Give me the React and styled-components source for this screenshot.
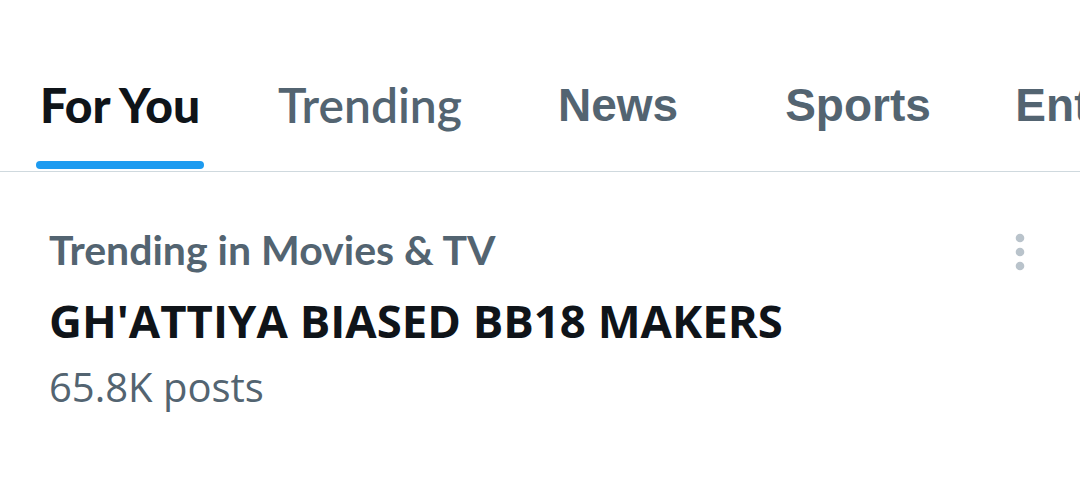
import React from "react";
import styled, { createGlobalStyle } from "styled-components";

const GlobalStyle = createGlobalStyle`
  html, body {
    margin: 0;
    padding: 0;
    background: #ffffff;
    overflow: hidden;
  }
`;

const tabs = [
  { label: "For You", width: 240, active: true, font: "Lato" },
  { label: "Trending", width: 260, font: "Lato" },
  { label: "News", width: 236, font: "Liberation Sans" },
  { label: "Sports", width: 244, font: "Liberation Sans" },
  { label: "Entertainment", width: 380, font: "Liberation Sans" },
];

export default function App() {
  return (
    <Page>
      <GlobalStyle />
      <TabBar>
        {tabs.map((t) => (
          <Tab key={t.label} $width={t.width}>
            <TabLabel $active={t.active} $font={t.font}>
              {t.label}
            </TabLabel>
            {t.active && <Underline />}
          </Tab>
        ))}
      </TabBar>
      <TrendRow>
        <TrendText>
          <Context>Trending in Movies &amp; TV</Context>
          <Title>GH'ATTIYA BIASED BB18 MAKERS</Title>
          <Posts>65.8K posts</Posts>
        </TrendText>
        <MoreButton aria-label="More">
          <svg width="12" height="40" viewBox="0 0 12 40">
            <circle cx="6" cy="6" r="4.3" fill="#b9c3cb" />
            <circle cx="6" cy="20" r="4.3" fill="#b9c3cb" />
            <circle cx="6" cy="34" r="4.3" fill="#b9c3cb" />
          </svg>
        </MoreButton>
      </TrendRow>
    </Page>
  );
}

const Page = styled.div`
  width: 1080px;
  height: 483px;
  background: #ffffff;
  overflow: hidden;
`;

const TabBar = styled.div`
  display: flex;
  flex-direction: row;
  height: 172px;
  padding-top: 73px;
  box-sizing: border-box;
  border-bottom: 1.5px solid #cfd9de;
  width: 1080px;
  overflow: hidden;
`;

const Tab = styled.div`
  flex: 0 0 ${(p) => p.$width}px;
  display: flex;
  flex-direction: column;
  align-items: center;
  justify-content: space-between;
`;

const TabLabel = styled.div`
  font-family: ${(p) => (p.$font === "Lato" ? '"Lato"' : '"Liberation Sans"')}, sans-serif;
  font-size: ${(p) => (p.$font === "Lato" ? "48px" : "46px")};
  font-weight: ${(p) => (p.$active ? 900 : p.$font === "Lato" ? 600 : 700)};
  color: ${(p) => (p.$active ? "#0f1419" : "#536471")};
  line-height: 64px;
  white-space: nowrap;
`;

const Underline = styled.div`
  width: 168px;
  height: 8px;
  border-radius: 4px;
  background: #1d9bf0;
  margin-bottom: 2px;
`;

const TrendRow = styled.div`
  display: flex;
  flex-direction: row;
  justify-content: space-between;
  align-items: flex-start;
  padding: 54px 54px 0 49px;
`;

const TrendText = styled.div`
  display: flex;
  flex-direction: column;
`;

const Context = styled.div`
  font-family: "Lato", sans-serif;
  font-weight: 700;
  font-size: 41px;
  color: #536471;
  line-height: 48px;
`;

const Title = styled.div`
  font-family: "Open Sans", sans-serif;
  font-weight: 700;
  font-size: 45.5px;
  color: #0f1419;
  line-height: 56px;
  margin-top: 18px;
`;

const Posts = styled.div`
  font-family: "Open Sans", sans-serif;
  font-weight: 400;
  font-size: 40px;
  color: #536471;
  line-height: 52px;
  margin-top: 13px;
`;

const MoreButton = styled.div`
  padding-top: 6px;
  display: flex;
`;
